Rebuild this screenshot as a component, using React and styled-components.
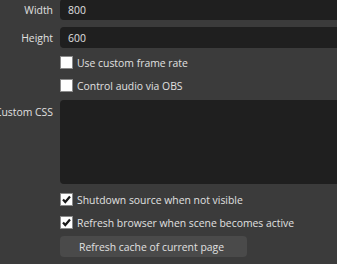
import React from "react";
import styled, { createGlobalStyle } from "styled-components";

const Global = createGlobalStyle`
  html, body { margin: 0; padding: 0; background: #3b3b3b; overflow: hidden; }
  body { width: 337px; height: 264px; font-family: "Open Sans", "Noto Sans", sans-serif; font-size: 10.4px; color: #e0e0e0; }
`;

const Page = styled.div`
  display: flex;
  flex-direction: column;
  margin-top: -1px;
  width: 337px;
`;

const Row = styled.div`
  display: grid;
  grid-template-columns: 53px 1fr;
  column-gap: 7px;
  align-items: ${(p) => (p.$top ? "start" : "center")};
  margin-top: ${(p) => p.$mt || 0}px;
  margin-right: -12px;
`;

const Label = styled.div`
  display: flex;
  justify-content: flex-end;
  white-space: nowrap;
  line-height: 20px;
  padding-top: ${(p) => (p.$top ? 2 : 1)}px;
  min-width: 0;
`;

const Field = styled.div`
  height: 21px;
  background: #1f1f1f;
  border-radius: 4px;
  padding-left: 8px;
  display: flex;
  align-items: center;
  padding-top: 1px;
  box-sizing: border-box;
`;

const TextArea = styled.div`
  height: 84px;
  background: #1f1f1f;
  border-radius: 4px;
`;

const CheckRow = styled.div`
  display: flex;
  align-items: center;
  height: 23px;
  margin-left: 60px;
  margin-top: ${(p) => p.$mt || 0}px;
  gap: 4px;
  white-space: nowrap;
`;

const Box = styled.div`
  width: 13px;
  height: 13px;
  box-sizing: border-box;
  background: #ffffff;
  border: 1px solid #8a8a8a;
  display: flex;
  align-items: center;
  justify-content: center;
  flex: none;
`;

const CheckText = styled.span`
  padding-top: 1px;
`;

const Button = styled.div`
  margin-left: 60px;
  margin-top: ${(p) => p.$mt || 0}px;
  width: 187px;
  height: 21px;
  box-sizing: border-box;
  background: #4a4a4a;
  border-radius: 4px;
  display: flex;
  align-items: center;
  padding-left: 19px;
  padding-top: 1px;
  white-space: nowrap;
`;

const Check = ({ checked, children, mt }) => (
  <CheckRow $mt={mt}>
    <Box>
      {checked && (
        <svg width="11" height="11" viewBox="0 0 11 11">
          <path d="M2 5.5 L4.3 8 L9 2.5" fill="none" stroke="#1a1a1a" strokeWidth="2.2" />
        </svg>
      )}
    </Box>
    <CheckText>{children}</CheckText>
  </CheckRow>
);

export default function App() {
  return (
    <>
      <Global />
      <Page>
        <Row>
          <Label>Width</Label>
          <Field>800</Field>
        </Row>
        <Row $mt={7}>
          <Label>Height</Label>
          <Field>600</Field>
        </Row>
        <Check mt={3}>Use custom frame rate</Check>
        <Check>Control audio via OBS</Check>
        <Row $mt={3} $top>
          <Label $top>Custom CSS</Label>
          <TextArea />
        </Row>
        <Check mt={4} checked>Shutdown source when not visible</Check>
        <Check checked>Refresh browser when scene becomes active</Check>
        <Button $mt={2}>Refresh cache of current page</Button>
      </Page>
    </>
  );
}
